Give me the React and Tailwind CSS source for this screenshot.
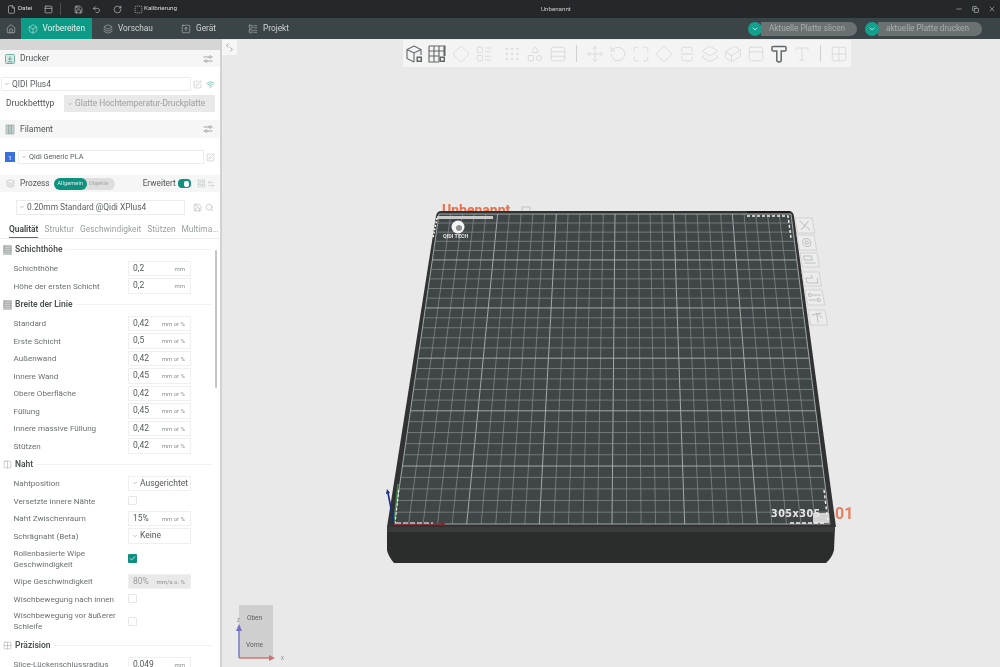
import React from "react";
import {
  File, PanelTop, Save, Undo2, RotateCw, SquareDashed, House, Box, Layers, SquareArrowUp, ChevronDown, ChevronLeft, ChevronRight,
  SquarePen, Wifi, Search, Minus, Copy, X, Columns2, Grid2x2, Rows3, Grip,
  Check, LayoutList, ArrowLeftRight, Move, RotateCcw, Maximize, Diamond, SquareSplitVertical, Layers2, Type, LayoutGrid, Shapes, Cuboid,
} from "lucide-react";

const F = "font-['Roboto','Noto_Sans',sans-serif]";

function TopBar() {
  return (
    <div className="h-[18px] bg-[#24282a] text-[#d8dcdc] flex items-center text-[6.2px] relative shrink-0">
      <File size={9} strokeWidth={1.5} className="ml-[7px]" />
      <span className="ml-[2px] w-[14px]">Datei</span>
      <PanelTop size={9} strokeWidth={1.5} className="ml-[12px]" />
      <div className="w-px h-[12px] bg-[#4a4f51] ml-[7px]" />
      <Save size={9} strokeWidth={1.5} className="ml-[13px]" />
      <Undo2 size={9} strokeWidth={1.5} className="ml-[9px]" />
      <RotateCw size={9} strokeWidth={1.5} className="ml-[12px]" />
      <SquareDashed size={9} strokeWidth={1.5} className="ml-[12px]" />
      <span className="ml-[1px]">Kalibrierung</span>
      <span className="absolute left-[541px] top-[5px] text-[6.2px] text-[#c8cccc]">Unbenannt</span>
      <div className="ml-auto flex items-center gap-[9px] mr-[4px]">
        <Minus size={8} strokeWidth={1.5} />
        <Copy size={7} strokeWidth={2} />
        <X size={8} strokeWidth={1.5} />
      </div>
    </div>
  );
}

function Tab({ icon: Icon, label, className }) {
  return (
    <div className={"flex items-center gap-[5px] " + className}>
      <Icon size={10} strokeWidth={1.2} />
      <span>{label}</span>
    </div>
  );
}

function PillButton({ label, w }) {
  return (
    <div className="flex items-center h-[14px]">
      <div className="w-[14px] h-[14px] rounded-full bg-[#14a08f] flex items-center justify-center z-10">
        <ChevronDown size={8} className="text-white" />
      </div>
      <div className={"h-[14px] -ml-[1px] rounded-r-full bg-[#6b7071] text-[#a9adad] text-[8.2px] flex items-center pl-[8px] " + w}>{label}</div>
    </div>
  );
}

function TabBar() {
  return (
    <div className="h-[21px] bg-[#3b4446] text-[#cfd4d4] text-[8.3px] flex items-stretch shrink-0">
      <div className="w-[21px] flex items-center justify-center"><House size={10} strokeWidth={1.3} /></div>
      <Tab icon={Box} label="Vorbereiten" className="w-[71px] bg-[#0d9b88] pl-[6.5px] text-[#e4f3f0]" />
      <Tab icon={Layers} label="Vorschau" className="ml-[11px] w-[78px]" />
      <Tab icon={SquareArrowUp} label="Gerät" className="w-[67px]" />
      <Tab icon={LayoutList} label="Projekt" />
      <div className="ml-auto mr-[18px] flex items-center gap-[8px]">
        <PillButton label="Aktuelle Platte slicen" w="w-[96px]" />
        <PillButton label="aktuelle Platte drucken" w="w-[104px]" />
      </div>
    </div>
  );
}

function SliderIcon() {
  return (
    <svg width="10" height="10" viewBox="0 0 10 10" fill="none" stroke="#8f9595" strokeWidth="0.8" className="ml-auto">
      <path d="M0.5 3 H6 M8.5 3 H9.5 M0.5 7 H2 M4.5 7 H9.5" />
      <circle cx="7.2" cy="3" r="1.2" />
      <circle cx="3.2" cy="7" r="1.2" />
    </svg>
  );
}

function PrinterIcon() {
  return (
    <svg width="10" height="10" viewBox="0 0 10 10" fill="none">
      <rect x="0.5" y="0.5" width="9" height="9" rx="1" stroke="#6fae9f" fill="#dcebe7" />
      <path d="M5 2.2 V6 M3.2 4.4 L5 6.2 L6.8 4.4 M2.5 7.8 H7.5" stroke="#3e8d7e" strokeWidth="0.8" />
    </svg>
  );
}

function SpoolIcon() {
  return (
    <svg width="10" height="11" viewBox="0 0 10 11" fill="none">
      <rect x="1" y="1" width="8" height="9" fill="#c3d0cd" stroke="#9ab0ab" strokeWidth="0.7" />
      <path d="M3.7 1 V10 M6.3 1 V10" stroke="#7f9a94" strokeWidth="0.7" />
    </svg>
  );
}

function HeaderRow({ iconEl, label, mt = "", h = "h-[18px]" }) {
  return (
    <div className={"flex items-center bg-[#f6f6f6] pl-[5px] pr-[7px] text-[8.5px] text-[#4f5556] " + h + " " + mt}>
      {iconEl}
      <span className="ml-[5px]">{label}</span>
      <SliderIcon />
    </div>
  );
}

function SelectBox({ className, text, tiny }) {
  return (
    <div className={"flex items-center border border-[#ececec] bg-white text-[#5a6061] whitespace-nowrap " + (tiny || "text-[8.4px]") + " " + className}>
      <ChevronDown size={6} className="mx-[2px] text-[#888] shrink-0" />
      <span>{text}</span>
    </div>
  );
}

function Section({ icon: Icon, label, h = "h-[20px]", box = true, className = "" }) {
  return (
    <div className={"flex items-center pl-[3px] " + h + " " + className}>
      <div className={"w-[9px] h-[10px] flex items-center justify-center text-[#7d8383] " + (box ? "bg-[#c9cccc]" : "")}>
        <Icon size={9} strokeWidth={1} />
      </div>
      <span className="ml-[3px] text-[8.5px] font-semibold text-[#4c5253] leading-none">{label}</span>
      <div className="ml-[3px] flex-1 h-px bg-[#f2f2f2] mr-[8px]" />
    </div>
  );
}

function Label({ children, two }) {
  return <div className={"w-[115px] shrink-0 text-[8.1px] text-[#6a7071] " + (two ? "leading-[11px]" : "leading-none")}>{children}</div>;
}

function InputRow({ label, value, unit = "mm or %", disabled }) {
  return (
    <div className="h-[17.5px] flex items-center pl-[13.5px]">
      <Label>{label}</Label>
      <div className={"w-[63px] h-[15.5px] border border-[#efefef] flex items-center pl-[4px] pr-[5px] ml-[-0.5px] " + (disabled ? "bg-[#e9e9e9]" : "bg-white")}>
        <span className={"text-[8.5px] " + (disabled ? "text-[#9a9e9e]" : "text-[#555b5c]")}>{value}</span>
        <span className="ml-auto text-[6px] text-[#8a8f8f]">{unit}</span>
      </div>
    </div>
  );
}

function SelectRow({ label, value }) {
  return (
    <div className="h-[17.5px] flex items-center pl-[13.5px]">
      <Label>{label}</Label>
      <div className="w-[63px] h-[15.5px] border border-[#efefef] bg-white flex items-center ml-[-0.5px] text-[8.5px] text-[#555b5c]">
        <ChevronDown size={6} className="ml-[3px] mr-[2px] text-[#888]" />
        <span>{value}</span>
      </div>
    </div>
  );
}

function CheckRow({ label, checked, h = "h-[17.5px]", two }) {
  return (
    <div className={"flex items-center pl-[13.5px] " + h}>
      <Label two={two}>{label}</Label>
      {checked ? (
        <div className="w-[9px] h-[9px] rounded-[1px] bg-[#0f8f80] flex items-center justify-center ml-[-0.5px]">
          <Check size={7} strokeWidth={2.5} className="text-white" />
        </div>
      ) : (
        <div className="w-[9px] h-[9px] rounded-[1px] border border-[#e6e6e6] bg-white ml-[-0.5px]" />
      )}
    </div>
  );
}

function Sidebar() {
  return (
    <div className="w-[220px] shrink-0 bg-white border-r-[2px] border-[#d2d2d2] box-content overflow-hidden relative">
      <div className="h-[11px] bg-[#d6d6d6]" />
      <HeaderRow iconEl={<PrinterIcon />} label="Drucker" h="h-[17px]" />

      <div className="mt-[10px] flex items-center pl-[1px] h-[14px]">
        <SelectBox className="w-[190px] h-[14px]" text="QIDI Plus4" />
        <SquarePen size={9} strokeWidth={1.2} className="ml-[2px] text-[#a5a9a9]" />
        <Wifi size={9} strokeWidth={1.8} className="ml-[4px] text-[#4fb3a4]" />
      </div>
      <div className="mt-[4px] flex items-center h-[17px] pl-[6px]">
        <span className="w-[58px] text-[8.5px] text-[#4f5556]">Druckbetttyp</span>
        <div className="w-[151px] h-[17px] bg-[#e9e9e9] flex items-center text-[8.4px] text-[#9a9f9f] whitespace-nowrap">
          <ChevronDown size={6} className="ml-[3px] mr-[2px] text-[#999]" />
          Glatte Hochtemperatur-Druckplatte
        </div>
      </div>

      <HeaderRow iconEl={<SpoolIcon />} label="Filament" mt="mt-[8px]" />

      <div className="mt-[12px] flex items-center pl-[5px] h-[14px]">
        <div className="w-[10px] h-[10px] bg-[#3a6fe0] text-white text-[6px] flex items-center justify-center">1</div>
        <SelectBox className="ml-[3px] w-[186px] h-[14px]" text="Qidi Generic PLA" tiny="text-[7.3px]" />
        <SquarePen size={9} strokeWidth={1.2} className="ml-[2px] text-[#a5a9a9]" />
      </div>

      <div className="mt-[11px] h-[17px] bg-[#f6f6f6] flex items-center pl-[6px] text-[8.3px] text-[#4f5556]">
        <Layers size={9} strokeWidth={1.3} className="text-[#9da3a3]" />
        <span className="ml-[5px]">Prozess</span>
        <div className="ml-[4px] w-[61px] h-[12px] rounded-full bg-[#dedede] flex items-center text-[5.8px] shrink-0">
          <div className="w-[33px] h-[12px] rounded-full bg-[#0e917f] text-[#d8f0ec] flex items-center justify-center">Allgemein</div>
          <span className="ml-[2px] text-[#a5a9a9]">Objekte</span>
        </div>
        <span className="ml-[28px]">Erweitert</span>
        <div className="ml-[2px] w-[13px] h-[9px] rounded-[4px] bg-[#0e917f] flex items-center justify-end pr-[1.5px] shrink-0">
          <div className="w-[5px] h-[6px] rounded-[2px] bg-white" />
        </div>
        <LayoutGrid size={9} strokeWidth={1} className="ml-[6px] text-[#9da3a3]" />
        <ArrowLeftRight size={8} strokeWidth={1} className="ml-px text-[#9da3a3]" />
      </div>

      <div className="mt-[8px] flex items-center pl-[16px] h-[14px]">
        <SelectBox className="w-[169px] h-[15px]" text="0.20mm Standard @Qidi XPlus4" />
        <Save size={9} strokeWidth={1.2} className="ml-[8px] text-[#9a9f9f]" />
        <Search size={9} strokeWidth={1.2} className="ml-[3px] text-[#9a9f9f]" />
      </div>

      <div className="mt-[6px] h-[19px] border-b border-[#eeeeee] flex items-end pl-[9px] text-[8.4px] text-[#9aa0a0] gap-[6px] whitespace-nowrap">
        <span className="pb-[2px] h-[16px] border-b-[1.5px] border-[#0e917f] text-[#3f4546] font-semibold leading-[14px]">Qualität</span>
        <span className="h-[16px] leading-[14px]">Struktur</span>
        <span className="h-[16px] leading-[14px]">Geschwindigkeit</span>
        <span className="h-[16px] leading-[14px]">Stützen</span>
        <span className="h-[16px] leading-[14px]">Multima...</span>
      </div>

      <div className="absolute left-[215px] top-[211px] w-[2px] h-[138px] bg-[#c4c6c6] rounded-full" />

      <Section icon={Rows3} label="Schichthöhe" className="mt-[0.5px]" />
      <InputRow label="Schichthöhe" value="0,2" unit="mm" />
      <InputRow label="Höhe der ersten Schicht" value="0,2" unit="mm" />
      <Section icon={Rows3} label="Breite der Linie" />
      <InputRow label="Standard" value="0,42" />
      <InputRow label="Erste Schicht" value="0,5" />
      <InputRow label="Außenwand" value="0,42" />
      <InputRow label="Innere Wand" value="0,45" />
      <InputRow label="Obere Oberfläche" value="0,42" />
      <InputRow label="Füllung" value="0,45" />
      <InputRow label="Innere massive Füllung" value="0,42" />
      <InputRow label="Stützen" value="0,42" />
      <Section icon={Columns2} label="Naht" box={false} />
      <SelectRow label="Nahtposition" value="Ausgerichtet" />
      <CheckRow label="Versetzte innere Nähte" />
      <InputRow label="Naht Zwischenraum" value="15%" />
      <SelectRow label="Schrägnaht (Beta)" value="Keine" />
      <CheckRow two checked h="h-[28px]" label={<>Rollenbasierte Wipe<br />Geschwindigkeit</>} />
      <InputRow label="Wipe Geschwindigkeit" value="80%" unit="mm/s o. %" disabled />
      <CheckRow label="Wischbewegung nach innen" />
      <CheckRow two h="h-[27px]" label={<>Wischbewegung vor äußerer<br />Schleife</>} />
      <Section icon={Grid2x2} label="Präzision" h="h-[21px]" box={false} />
      <InputRow label="Slice-Lückenschlussradius" value="0,049" unit="mm" />
    </div>
  );
}

const tl = [439, 214], tr = [791, 214], br = [830, 524], bl = [394, 524];
const A = 1.15;
function frac(v) {
  return v / (v + (1 - v) * A);
}
function lerp(a, b, t) {
  return a + (b - a) * t;
}

function Plate() {
  const n = 30;
  const m = 30;
  const thin = "#8a8f91";
  const thick = "#b0b3b4";
  const lines = [];
  for (let i = 0; i <= n; i++) {
    const u = i / n;
    const bold = i % 5 === 0;
    lines.push(
      <line key={"v" + i} x1={lerp(tl[0], tr[0], u)} y1={tl[1]} x2={lerp(bl[0], br[0], u)} y2={bl[1]}
        stroke={bold ? thick : thin} strokeWidth={bold ? 0.9 : 0.7} />
    );
  }
  for (let j = 0; j <= m; j++) {
    const f = frac(j / m);
    const y = lerp(tl[1], bl[1], f);
    const xl = lerp(tl[0], bl[0], f);
    const xr = lerp(tr[0], br[0], f);
    const bold = j % 5 === 0;
    lines.push(
      <line key={"h" + j} x1={xl} y1={y} x2={xr} y2={y}
        stroke={bold ? thick : thin} strokeWidth={bold ? 0.9 : 0.7} />
    );
  }
  return lines;
}

function SideIcon({ x, y, w = 17, h = 15, children }) {
  return (
    <g transform={`translate(${x} ${y}) skewX(10)`} fill="none" stroke="#bdbfbf" strokeWidth="1">
      <rect width={w} height={h} fill="#ececec" stroke="#d2d2d2" />
      {children}
    </g>
  );
}

function Scene() {
  return (
    <svg className="block w-[778px] h-[628px]" viewBox="222 39 778 628">
      <text x="442" y="215" fontSize="14" fontWeight="700" fill="#e8704e" fontFamily="Roboto, sans-serif">Unbenannt</text>
      <rect x="522" y="207" width="8" height="6" fill="none" stroke="#c4c4c4" />
      <path d="M387 526 L387 550 Q388 556 394 563 L826 563 Q832 558 834 550 L835 526 Z" fill="#2b2d2c" />
      <path d="M387 526 L835 526 L835 532 L387 532 Z" fill="#3a3c3c" />
      <path d="M441 211 L789 211 Q793 211 794 216 L836 527 L387 527 L436 216 Q437 211 441 211 Z" fill="#303233" />
      <path d="M439 214 L791 214 L830 524 L394 524 Z" fill="#404547" />
      <Plate />
      <rect x="437" y="216" width="56" height="3" fill="#c8c9c9" />
      <path d="M437 218 L433 238" stroke="#ffffff" strokeWidth="1.4" strokeDasharray="2 1.5" />
      <path d="M747 216 L788 216 L791 238" stroke="#f1f1f1" strokeWidth="1.4" strokeDasharray="3 2" fill="none" />
      <path d="M747 212 L790 212" stroke="#1c1c1c" strokeWidth="2" />
      <g>
        <circle cx="458" cy="227" r="6.5" fill="#f4f4f4" />
        <circle cx="459" cy="228" r="3" fill="#8c9092" />
        <text x="443" y="238" fontSize="5.4" fontWeight="700" fill="#e4e4e4" fontFamily="Roboto, sans-serif">QIDI TECH</text>
      </g>
      <rect x="813" y="513" width="16" height="10" fill="#d2d2d2" />
      <text x="771" y="517" fontSize="9.6" fontWeight="700" letterSpacing="0.5" fill="#e8e8e8" fontFamily="DejaVu Sans, sans-serif">305x305</text>
      <text x="835" y="519" fontSize="16" fontWeight="700" fill="#e6805e" fontFamily="Roboto, sans-serif">01</text>
      <path d="M824 490 L828 522" stroke="#f1f1f1" strokeWidth="1.4" strokeDasharray="3 2.5" />
      <path d="M790 523 L826 523" stroke="#f1f1f1" strokeWidth="1.4" strokeDasharray="4 2" />
      <path d="M394 524 L443 524" stroke="#8f1f28" strokeWidth="1.6" />
      <path d="M441 522 L446 524 L441 526 Z" fill="#8f1f28" />
      <path d="M394 524 L398 484" stroke="#3f8a48" strokeWidth="1.6" />
      <path d="M395 524 L399 488" stroke="#ffffff" strokeWidth="1" strokeDasharray="3 1.5" />
      <path d="M396 523 L433 523" stroke="#ffffff" strokeWidth="1" strokeDasharray="5 2" />
      <path d="M394 524 L388 493" stroke="#1d2a80" strokeWidth="1.6" />
      <path d="M386 494 L387 489 L390 493 Z" fill="#1d2a80" />

      <SideIcon x={795} y={218}><path d="M4 3 L13 12 M13 3 L4 12" /></SideIcon>
      <SideIcon x={797} y={235}><circle cx="8.5" cy="7.5" r="4" /><circle cx="8.5" cy="7.5" r="1.5" /></SideIcon>
      <SideIcon x={800} y={253} h={14}><rect x="3" y="3" width="8" height="4" /><path d="M3 10 L14 10" /></SideIcon>
      <SideIcon x={802} y={272} h={14}><path d="M3 11 L3 6 L9 6 L9 3 M3 11 L14 11 L14 6" /></SideIcon>
      <SideIcon x={805} y={290}><circle cx="4" cy="5" r="1.5" /><circle cx="12" cy="10" r="1.5" /><path d="M6 5 L15 5 M2 10 L10 10" /></SideIcon>
      <SideIcon x={808} y={310}><path d="M8 3 L8 13 M3 5 L13 3 M8 3 L13 8" /></SideIcon>

      <rect x="239" y="605" width="34" height="53" fill="#cfcfcf" />
      <text x="247" y="620" fontSize="6.5" fill="#5c5c5c" fontFamily="Roboto, sans-serif">Oben</text>
      <text x="246" y="647" fontSize="6.5" fill="#5c5c5c" fontFamily="Roboto, sans-serif">Vorne</text>
      <path d="M239 658 L239 630" stroke="#7272c4" strokeWidth="1.4" />
      <path d="M236 631 L239 624 L242 631 Z" fill="#7272c4" />
      <path d="M239 658 L270 658" stroke="#d07070" strokeWidth="1.4" />
      <path d="M269 655 L275 658 L269 661 Z" fill="#d07070" />
      <text x="237" y="622" fontSize="4.5" fill="#888" fontFamily="Roboto, sans-serif">Z</text>
      <text x="281" y="660" fontSize="4.5" fill="#888" fontFamily="Roboto, sans-serif">X</text>
    </svg>
  );
}

function Tool({ icon: Icon, className = "" }) {
  return <Icon size={18} strokeWidth={1.1} className={"text-[#d6d7d7] shrink-0 " + className} />;
}

function CubeTool() {
  return (
    <svg width="18" height="18" viewBox="0 0 18 18" fill="none" stroke="#62686a" strokeWidth="1.1" className="shrink-0">
      <path d="M9 1 L16 4.5 V10 M9 1 L2 4.5 V13.5 L9 17 M2 4.5 L9 8 L16 4.5 M9 8 V17" />
      <rect x="11.5" y="11.5" width="5.5" height="5.5" fill="#62686a" stroke="none" />
      <rect x="13" y="13" width="2.5" height="2.5" fill="#f4f4f4" stroke="none" />
    </svg>
  );
}

function GridTool() {
  return (
    <svg width="18" height="18" viewBox="0 0 18 18" fill="none" stroke="#62686a" strokeWidth="1.1" className="shrink-0">
      <path d="M1 1 H17 V11 M1 1 V17 H11 M1 6 H17 M1 11 H11 M6 1 V17 M11 1 V17 M16 1 V11" />
      <rect x="11.5" y="11.5" width="5.5" height="5.5" fill="#62686a" stroke="none" />
      <rect x="13" y="13" width="2.5" height="2.5" fill="#f4f4f4" stroke="none" />
    </svg>
  );
}

function BoldT({ stroke }) {
  return (
    <svg width="18" height="18" viewBox="0 0 18 18" fill="none" stroke={stroke} strokeWidth="1.5" className="shrink-0">
      <path d="M2 2.5 Q2 1.5 3 1.5 H15 Q16 1.5 16 2.5 V5 Q16 6 15 6 H11.2 V15 Q11.2 17 9 17 Q6.8 17 6.8 15 V6 H3 Q2 6 2 5 Z" />
    </svg>
  );
}

function Toolbar() {
  return (
    <div className="absolute left-[181px] top-px w-[448px] h-[27px] bg-[#f4f4f4] flex items-center pl-[2px] gap-[5px]">
      <CubeTool />
      <GridTool />
      <Tool icon={Diamond} className="ml-px" />
      <Tool icon={LayoutList} />
      <Tool icon={Grip} className="ml-[5px]" />
      <Tool icon={Shapes} />
      <Tool icon={Rows3} />
      <div className="w-px h-[17px] bg-[#d0d0d0] mx-[4px]" />
      <Tool icon={Move} />
      <Tool icon={RotateCcw} />
      <Tool icon={Maximize} />
      <Tool icon={Diamond} />
      <Tool icon={SquareSplitVertical} />
      <Tool icon={Layers2} />
      <Tool icon={Cuboid} />
      <Tool icon={PanelTop} />
      <BoldT stroke="#62686a" />
      <Tool icon={Type} />
      <div className="w-px h-[17px] bg-[#d0d0d0] mx-[4px]" />
      <Tool icon={Grid2x2} />
    </div>
  );
}

export default function App() {
  return (
    <div className={"w-[1000px] h-[667px] overflow-hidden flex flex-col bg-[#e9e9e9] blur-[0.4px] " + F}>
      <TopBar />
      <TabBar />
      <div className="flex-1 flex min-h-0">
        <Sidebar />
        <div className="relative flex-1 min-w-0">
          <Scene />
          <div className="absolute left-0 top-px w-[15px] h-[15px] bg-[#f6f6f6] text-[#555]">
            <ChevronLeft size={7} strokeWidth={1.8} className="absolute left-[2px] top-[2px]" />
            <ChevronRight size={7} strokeWidth={1.8} className="absolute left-[6px] top-[6px]" />
          </div>
          <Toolbar />
        </div>
      </div>
    </div>
  );
}
